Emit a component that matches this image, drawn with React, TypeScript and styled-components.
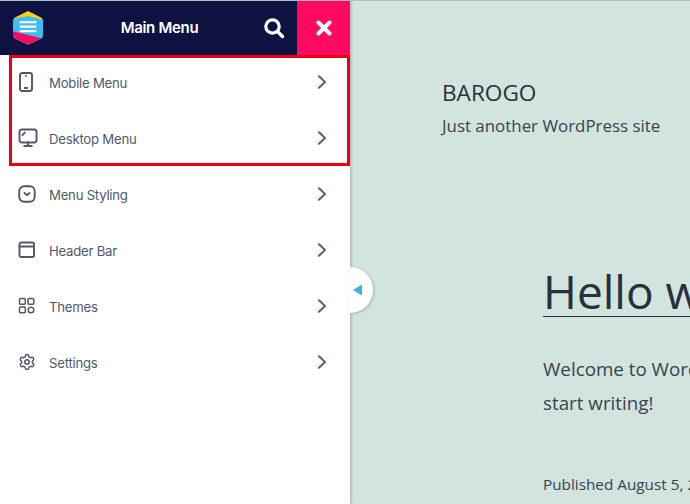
import React from "react";
import styled, { createGlobalStyle } from "styled-components";
import { Settings } from "lucide-react";

const Global = createGlobalStyle`
  html, body { margin: 0; padding: 0; width: 690px; height: 504px; overflow: hidden; background: #d2e4de; }
  #root { width: 690px; height: 504px; }
  * { box-sizing: border-box; }
`;

const Page = styled.div`
  display: flex;
  width: 690px;
  height: 504px;
  overflow: hidden;
  background: #d2e4de;
  border-top: 1px solid #b5bdb9;
`;

const Sidebar = styled.aside`
  position: relative;
  flex: 0 0 350px;
  background: #fff;
  box-shadow: 1px 0 3px rgba(60, 80, 75, 0.35);
  z-index: 2;
`;

const TopBar = styled.header`
  display: flex;
  align-items: center;
  height: 54px;
  background: #0d1240;
`;

const LogoSlot = styled.div`
  flex: 0 0 auto;
  display: flex;
  padding-left: 12px;
`;

const Title = styled.h1`
  flex: 1;
  margin: 0 0 0 22px;
  text-align: center;
  color: #fff;
  font: 600 15px/20px Inter, "Liberation Sans", sans-serif;
  letter-spacing: -0.3px;
`;

const SearchButton = styled.div`
  flex: 0 0 44px;
  display: flex;
  justify-content: center;
  align-items: center;
  padding-right: 3px;
`;

const CloseButton = styled.div`
  flex: 0 0 53px;
  height: 54px;
  background: #ff0a62;
  display: flex;
  justify-content: center;
  align-items: center;
`;

const Menu = styled.nav`
  display: flex;
  flex-direction: column;
`;

const Row = styled.div`
  display: flex;
  align-items: center;
  height: 56px;
  padding: 0 23px 0 18px;
  color: #505869;
`;

const IconSlot = styled.span`
  flex: 0 0 31px;
  display: flex;
  align-items: center;
  margin-bottom: 2px;
`;

const ChevronSlot = styled.span`
  display: flex;
  margin-bottom: 2px;
`;

const Label = styled.span`
  flex: 1;
  font: 400 13.2px/18px Inter, "Liberation Sans", sans-serif;
  letter-spacing: -0.25px;
  color: #515969;
`;

const Highlight = styled.div`
  position: absolute;
  left: 9px;
  top: 54px;
  width: 341px;
  height: 111px;
  border: 3px solid #ea0012;
  pointer-events: none;
`;

const Handle = styled.div`
  position: absolute;
  left: 350px;
  top: 266px;
  width: 23px;
  height: 46px;
  border-radius: 0 23px 23px 0;
  background: #fff;
  box-shadow: 1px 1px 3px rgba(60, 80, 75, 0.3);
  display: flex;
  align-items: center;
  padding-left: 2px;
`;

const Site = styled.main`
  flex: 1;
  min-width: 0;
  color: #28303d;
  font-family: "Open Sans", "Noto Sans", sans-serif;
  padding: 78px 0 0 92px;
  white-space: nowrap;
`;

const SiteName = styled.div`
  font-size: 22.6px;
  line-height: 28px;
`;

const Tagline = styled.div`
  font-size: 16.9px;
  line-height: 28px;
  margin-top: 5px;
  color: #39424f;
`;

const Article = styled.article`
  margin: 116px 0 0 101px;
`;

const ArticleTitle = styled.h2`
  margin: 0;
  display: block;
  width: 147px;
  font-weight: 400;
  font-size: 46px;
  line-height: 70px;
  height: 61px;
  border-bottom: 1px solid #28303d;
  overflow: visible;
`;

const Body = styled.p`
  margin: 35px 0 0;
  font-size: 18.8px;
  line-height: 34px;
  color: #39424f;
`;

const Meta = styled.p`
  margin: 50px 0 0;
  font-size: 15.3px;
  line-height: 28px;
  color: #39424f;
`;

const stroke = { fill: "none", stroke: "#505869", strokeWidth: 1.9, strokeLinecap: "round" as const, strokeLinejoin: "round" as const };

const Logo = () => (
  <svg width="32" height="36" viewBox="0 0 32 36">
    <defs>
      <clipPath id="hex">
        <path d="M16 1 L29 7.5 Q31 8.5 31 11 V25 Q31 27.5 29 28.5 L16 34.5 L3 28.5 Q1 27.5 1 25 V11 Q1 8.5 3 7.5 Z" />
      </clipPath>
    </defs>
    <g clipPath="url(#hex)">
      <rect width="32" height="36" fill="#ffcf0d" />
      <path d="M0 9 L16 6 L32 10 V36 H0 Z" fill="#3fbdf1" />
      <path d="M0 21 L32 29 V36 H0 Z" fill="#f60a62" />
    </g>
    <rect x="7.5" y="11" width="17" height="2.2" rx="1" fill="#fff" />
    <rect x="7.5" y="15.5" width="17" height="2.2" rx="1" fill="#fff" />
    <rect x="7.5" y="20" width="17" height="2.2" rx="1" fill="#fff" />
  </svg>
);

const SearchIcon = () => (
  <svg width="22" height="22" viewBox="0 0 22 22" fill="none" stroke="#fff" strokeLinecap="round">
    <circle cx="9.5" cy="9.5" r="6.7" strokeWidth="3.2" />
    <path d="M15 15 L19.5 19.5" strokeWidth="3.4" />
  </svg>
);

const CloseIcon = () => (
  <svg width="16" height="16" viewBox="0 0 16 16" fill="none" stroke="#fff" strokeWidth="4" strokeLinecap="round">
    <path d="M2.5 2.5 L13.5 13.5 M13.5 2.5 L2.5 13.5" />
  </svg>
);

const Chevron = () => (
  <svg width="10" height="16" viewBox="0 0 10 16" fill="none" stroke="#5b6270" strokeWidth="2" strokeLinecap="round" strokeLinejoin="round">
    <path d="M2 2.3 L8 8 L2 13.7" />
  </svg>
);

const MobileIcon = () => (
  <svg width="16" height="20" viewBox="0 0 16 20" {...stroke}>
    <rect x="2" y="1" width="12" height="18" rx="2.2" />
    <path d="M8 4 V4.1 M6.8 16 H9.2" />
  </svg>
);

const DesktopIcon = () => (
  <svg width="20" height="20" viewBox="0 0 20 20" {...stroke}>
    <rect x="1.5" y="1.5" width="17" height="13" rx="2.2" />
    <path d="M10 14.5 V18 M6.2 18 H13.8 M4.5 7 L6.8 4.6" />
  </svg>
);

const StylingIcon = () => (
  <svg width="18" height="18" viewBox="0 0 18 18" {...stroke}>
    <rect x="1.2" y="1.2" width="15.5" height="15.5" rx="5" />
    <path d="M6.5 8 L9 10.3 L11.5 8" />
  </svg>
);

const HeaderIcon = () => (
  <svg width="18" height="18" viewBox="0 0 18 18" {...stroke}>
    <rect x="1.5" y="1.5" width="14.5" height="14.5" rx="1.8" />
    <path d="M1.5 5.5 H16" />
  </svg>
);

const ThemesIcon = () => (
  <svg width="18" height="18" viewBox="0 0 18 18" {...stroke} strokeWidth={1.5}>
    <rect x="1.5" y="1.5" width="5.8" height="5.8" rx="1" />
    <rect x="10" y="1.5" width="5.8" height="5.8" rx="1" />
    <rect x="1.5" y="10" width="5.8" height="5.8" rx="1" />
    <circle cx="13" cy="13" r="2.8" />
  </svg>
);

const GearIcon = () => <Settings size={18} color="#505869" strokeWidth={2} />;

const items = [
  { label: "Mobile Menu", icon: <MobileIcon /> },
  { label: "Desktop Menu", icon: <DesktopIcon /> },
  { label: "Menu Styling", icon: <StylingIcon /> },
  { label: "Header Bar", icon: <HeaderIcon /> },
  { label: "Themes", icon: <ThemesIcon /> },
  { label: "Settings", icon: <GearIcon /> },
];

export default function App() {
  return (
    <Page>
      <Global />
      <Sidebar>
        <TopBar>
          <LogoSlot><Logo /></LogoSlot>
          <Title>Main Menu</Title>
          <SearchButton><SearchIcon /></SearchButton>
          <CloseButton><CloseIcon /></CloseButton>
        </TopBar>
        <Menu>
          {items.map((item) => (
            <Row key={item.label}>
              <IconSlot>{item.icon}</IconSlot>
              <Label>{item.label}</Label>
              <ChevronSlot><Chevron /></ChevronSlot>
            </Row>
          ))}
        </Menu>
        <Highlight />
        <Handle>
          <svg width="11" height="14" viewBox="0 0 11 14"><path d="M1 7 L10 1.5 V12.5 Z" fill="#36b0ea" /></svg>
        </Handle>
      </Sidebar>
      <Site>
        <SiteName>BAROGO</SiteName>
        <Tagline>Just another WordPress site</Tagline>
        <Article>
          <ArticleTitle>Hello world!</ArticleTitle>
          <Body>Welcome to WordPress. This is your first post. Edit or delete it, then<br />start writing!</Body>
          <Meta>Published August 5, 2021</Meta>
        </Article>
      </Site>
    </Page>
  );
}
